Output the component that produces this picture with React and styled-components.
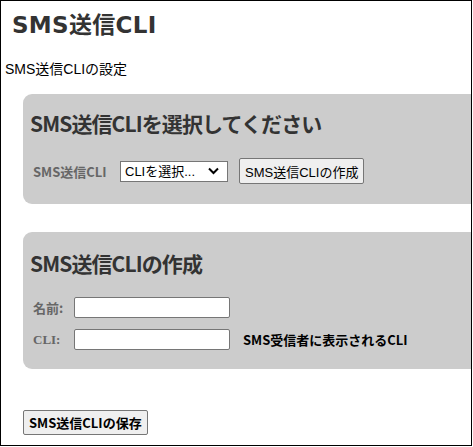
import React from "react";
import styled, { createGlobalStyle } from "styled-components";

const Global = createGlobalStyle`
  html, body { margin: 0; padding: 0; background: #fff; }
  body { font-family: "Liberation Sans", "Noto Sans CJK JP", sans-serif; color: #000; }
`;

const Frame = styled.div`
  box-sizing: border-box;
  width: 472px;
  height: 446px;
  border: 1px solid #000;
  overflow: hidden;
  background: #fff;
`;

const Title = styled.h1`
  margin: 9px 0 0 11px;
  height: 30px;
  line-height: 30px;
  font-family: "DejaVu Sans", "Noto Sans CJK JP", sans-serif;
  font-weight: 700;
  font-size: 23px;
  letter-spacing: 0.3px;
  color: #333;
`;

const Subtitle = styled.p`
  margin: 19px 0 0 4px;
  height: 20px;
  line-height: 20px;
  font-size: 14px;
  color: #000;
`;

const Panel = styled.section`
  box-sizing: border-box;
  width: 520px;
  margin: ${(p) => p.$top}px 0 0 22px;
  padding: ${(p) => p.$pt}px 0 ${(p) => p.$pb}px 7px;
  background: #ccc;
  border-radius: 9px;
`;

const PanelHeading = styled.h2`
  margin: 0;
  height: 28px;
  line-height: 28px;
  font-family: "Noto Sans CJK JP", sans-serif;
  font-weight: 700;
  font-size: 21px;
  letter-spacing: -0.9px;
  color: #333;
`;

const Row = styled.div`
  display: flex;
  align-items: center;
  height: ${(p) => p.$h}px;
  margin-top: ${(p) => p.$mt}px;
  padding-left: 3px;
`;

const Label = styled.label`
  flex: none;
  width: ${(p) => p.$w}px;
  font-family: ${(p) =>
    p.$serif
      ? `"Liberation Serif", "Noto Sans CJK JP", serif`
      : `"Noto Sans CJK JP", sans-serif`};
  font-weight: 700;
  font-size: ${(p) => p.$size || 12}px;
  color: #666;
`;

const SelectWrap = styled.div`
  position: relative;
  flex: none;
  width: 108px;
  height: 21px;
  margin-right: 11px;
`;

const Select = styled.select`
  appearance: none;
  box-sizing: border-box;
  width: 100%;
  height: 100%;
  margin: 0;
  padding: 0 0 0 4px;
  border: 1px solid #767676;
  border-radius: 0;
  background: #fff;
  font-family: "Liberation Sans", "Noto Sans CJK JP", sans-serif;
  font-size: 13px;
  color: #000;
`;

const Chevron = styled.svg`
  position: absolute;
  right: 9px;
  top: 6px;
  pointer-events: none;
`;

const Button = styled.button`
  box-sizing: border-box;
  flex: none;
  height: ${(p) => p.$h}px;
  padding: 0 ${(p) => p.$px}px;
  border: 1px solid #767676;
  border-radius: 2px;
  background: #efefef;
  font-family: ${(p) =>
    p.$bold ? `"Noto Sans CJK JP", sans-serif` : `"Liberation Sans", "Noto Sans CJK JP", sans-serif`};
  font-weight: ${(p) => (p.$bold ? 700 : 400)};
  font-size: 13px;
  color: #000;
`;

const Input = styled.input`
  box-sizing: border-box;
  flex: none;
  width: 156px;
  height: 21px;
  margin: 0 13px 0 0;
  padding: 0 3px;
  border: 1px solid #767676;
  border-radius: 2px;
  background: #fff;
`;

const Hint = styled.span`
  font-family: "Noto Sans CJK JP", sans-serif;
  font-weight: 700;
  font-size: 13px;
  color: #000;
`;

const Footer = styled.div`
  margin: 41px 0 0 22px;
`;

export default function App() {
  return (
    <>
      <Global />
      <Frame>
        <Title>SMS送信CLI</Title>
        <Subtitle>SMS送信CLIの設定</Subtitle>
        <Panel $top={15} $pt={15} $pb={20}>
          <PanelHeading>SMS送信CLIを選択してください</PanelHeading>
          <Row $h={26} $mt={21}>
            <Label $w={87} $size={13}>SMS送信CLI</Label>
            <SelectWrap>
              <Select defaultValue="">
                <option value="">CLIを選択...</option>
              </Select>
              <Chevron width="11" height="8" viewBox="0 0 11 8">
                <path d="M1 1.5 L5.5 6 L10 1.5" fill="none" stroke="#000" strokeWidth="2" />
              </Chevron>
            </SelectWrap>
            <Button $h={26} $px={5}>SMS送信CLIの作成</Button>
          </Row>
        </Panel>
        <Panel $top={28} $pt={17} $pb={19}>
          <PanelHeading>SMS送信CLIの作成</PanelHeading>
          <Row $h={21} $mt={20}>
            <Label $w={41} $size={13}>名前:</Label>
            <Input type="text" />
          </Row>
          <Row $h={21} $mt={11}>
            <Label $w={41} $size={13} $serif>CLI:</Label>
            <Input type="text" />
            <Hint>SMS受信者に表示されるCLI</Hint>
          </Row>
        </Panel>
        <Footer>
          <Button $h={25} $px={5} $bold>SMS送信CLIの保存</Button>
        </Footer>
      </Frame>
    </>
  );
}
